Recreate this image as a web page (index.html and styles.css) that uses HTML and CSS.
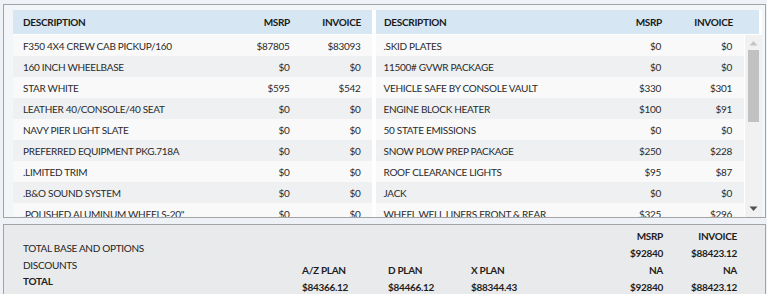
FILE: index.html
```html
<!DOCTYPE html>
<html>
<head>
<meta charset="utf-8">
<link rel="stylesheet" href="styles.css">
</head>
<body>
<div class="box">
  <div class="heads">
    <div class="head left"><span class="c-desc">DESCRIPTION</span><span class="c-msrp">MSRP</span><span class="c-inv">INVOICE</span></div>
    <div class="head right"><span class="c-desc">DESCRIPTION</span><span class="c-msrp">MSRP</span><span class="c-inv">INVOICE</span></div>
  </div>
  <div class="body">
    <div class="tbl left">
      <div class="row"><span class="c-desc">F350 4X4 CREW CAB PICKUP/160</span><span class="c-msrp">$87805</span><span class="c-inv">$83093</span></div>
      <div class="row"><span class="c-desc">160 INCH WHEELBASE</span><span class="c-msrp">$0</span><span class="c-inv">$0</span></div>
      <div class="row"><span class="c-desc">STAR WHITE</span><span class="c-msrp">$595</span><span class="c-inv">$542</span></div>
      <div class="row"><span class="c-desc">LEATHER 40/CONSOLE/40 SEAT</span><span class="c-msrp">$0</span><span class="c-inv">$0</span></div>
      <div class="row"><span class="c-desc">NAVY PIER LIGHT SLATE</span><span class="c-msrp">$0</span><span class="c-inv">$0</span></div>
      <div class="row"><span class="c-desc">PREFERRED EQUIPMENT PKG.718A</span><span class="c-msrp">$0</span><span class="c-inv">$0</span></div>
      <div class="row"><span class="c-desc">.LIMITED TRIM</span><span class="c-msrp">$0</span><span class="c-inv">$0</span></div>
      <div class="row"><span class="c-desc">.B&amp;O SOUND SYSTEM</span><span class="c-msrp">$0</span><span class="c-inv">$0</span></div>
      <div class="row"><span class="c-desc">.POLISHED ALUMINUM WHEELS-20"</span><span class="c-msrp">$0</span><span class="c-inv">$0</span></div>
    </div>
    <div class="tbl right">
      <div class="row"><span class="c-desc">.SKID PLATES</span><span class="c-msrp">$0</span><span class="c-inv">$0</span></div>
      <div class="row"><span class="c-desc">11500# GVWR PACKAGE</span><span class="c-msrp">$0</span><span class="c-inv">$0</span></div>
      <div class="row"><span class="c-desc">VEHICLE SAFE BY CONSOLE VAULT</span><span class="c-msrp">$330</span><span class="c-inv">$301</span></div>
      <div class="row"><span class="c-desc">ENGINE BLOCK HEATER</span><span class="c-msrp">$100</span><span class="c-inv">$91</span></div>
      <div class="row"><span class="c-desc">50 STATE EMISSIONS</span><span class="c-msrp">$0</span><span class="c-inv">$0</span></div>
      <div class="row"><span class="c-desc">SNOW PLOW PREP PACKAGE</span><span class="c-msrp">$250</span><span class="c-inv">$228</span></div>
      <div class="row"><span class="c-desc">ROOF CLEARANCE LIGHTS</span><span class="c-msrp">$95</span><span class="c-inv">$87</span></div>
      <div class="row"><span class="c-desc">JACK</span><span class="c-msrp">$0</span><span class="c-inv">$0</span></div>
      <div class="row"><span class="c-desc">WHEEL WELL LINERS FRONT &amp; REAR</span><span class="c-msrp">$325</span><span class="c-inv">$296</span></div>
    </div>
    <div class="scroll">
      <svg class="arrow" width="9" height="6" viewBox="0 0 9 6"><path d="M0.5 5.5 L4.5 1 L8.5 5.5 Z" fill="#c4c4c4"/></svg>
      <div class="thumb"></div>
      <svg class="arrow down" width="9" height="6" viewBox="0 0 9 6"><path d="M0.5 0.5 L4.5 5 L8.5 0.5 Z" fill="#505050"/></svg>
    </div>
  </div>
</div>
<div class="panel">
  <div class="labels">
    <div>TOTAL BASE AND OPTIONS</div>
    <div>DISCOUNTS</div>
    <div class="b">TOTAL</div>
    <div class="b">SUB TO: $10000</div>
  </div>
  <div class="plan p1"><div>A/Z PLAN</div><div>$84366.12</div></div>
  <div class="plan p2"><div>D PLAN</div><div>$84466.12</div></div>
  <div class="plan p3"><div>X PLAN</div><div>$88344.43</div></div>
  <div class="sum s1"><div>MSRP</div><div>$92840</div><div>NA</div><div>$92840</div></div>
  <div class="sum s2"><div>INVOICE</div><div>$88423.12</div><div>NA</div><div>$88423.12</div></div>
</div>
</body>
</html>
```

FILE: styles.css
```css
html, body {
  margin: 0;
  padding: 0;
}
body {
  width: 767px;
  height: 294px;
  overflow: hidden;
  background: #eef2f6;
  font-family: Lato, "Open Sans", sans-serif;
  font-size: 10px;
  letter-spacing: -0.3px;
  color: #2a2a2a;
}
.box {
  margin: 4px 1px 0 3px;
  height: 214px;
  border: 1px solid #a3a3a3;
  background: #f3f6f9;
  padding: 5px 3px 0 9px;
  box-sizing: border-box;
  overflow: hidden;
}
.heads {
  display: flex;
  gap: 4px;
  background: #fff;
}
.head {
  display: flex;
  align-items: center;
  height: 24px;
  background: #d7e6f3;
  font-weight: bold;
  color: #1a1a1a;
  border-bottom: 1px solid #fff;
}
.head.left { width: 359px; }
.head.right { width: 383px; }
.c-desc { flex: 1; padding-left: 10px; white-space: nowrap; }
.c-msrp { width: 60px; text-align: right; }
.c-inv { width: 71px; text-align: right; padding-right: 11px; }
.right .c-desc { padding-left: 8px; }
.head.right .c-inv { padding-right: 26px; }
.body {
  display: flex;
  gap: 4px;
  height: 185px;
  background: #fff;
}
.tbl {
  overflow: hidden;
}
.tbl.left { width: 359px; }
.tbl.right { width: 369px; }
.tbl.right .c-inv { padding-right: 12px; }
.row {
  display: flex;
  align-items: center;
  height: 21px;
  background: #f9f9f9;
}
.row:nth-child(even) { background: #eff0f2; }
.scroll {
  width: 17px;
  margin-left: -3px;
  background: #f1f1f1;
  display: flex;
  flex-direction: column;
  align-items: center;
  padding-top: 5px;
  box-sizing: border-box;
}
.thumb {
  width: 11px;
  height: 72px;
  margin-top: 4px;
  background: #c1c1c1;
}
.arrow.down { margin-top: auto; margin-bottom: 8px; }
.panel {
  margin: 6px 1px 0 3px;
  height: 80px;
  border: 1px solid #a3a3a3;
  background: #e9eaec;
  display: flex;
  box-sizing: border-box;
  padding: 0 0 0 19px;
  line-height: 17px;
  color: #1e1e1e;
}
.b { font-weight: bold; }
.labels { width: 279px; padding-top: 15px; line-height: 16.5px; }
.plan { padding-top: 37px; font-weight: bold; }
.p1 { width: 86px; }
.p2 { width: 83px; }
.p3 { width: 120px; }
.sum { padding-top: 3px; font-weight: bold; text-align: right; }
.s1 { width: 72px; }
.s2 { width: 74px; }
```
